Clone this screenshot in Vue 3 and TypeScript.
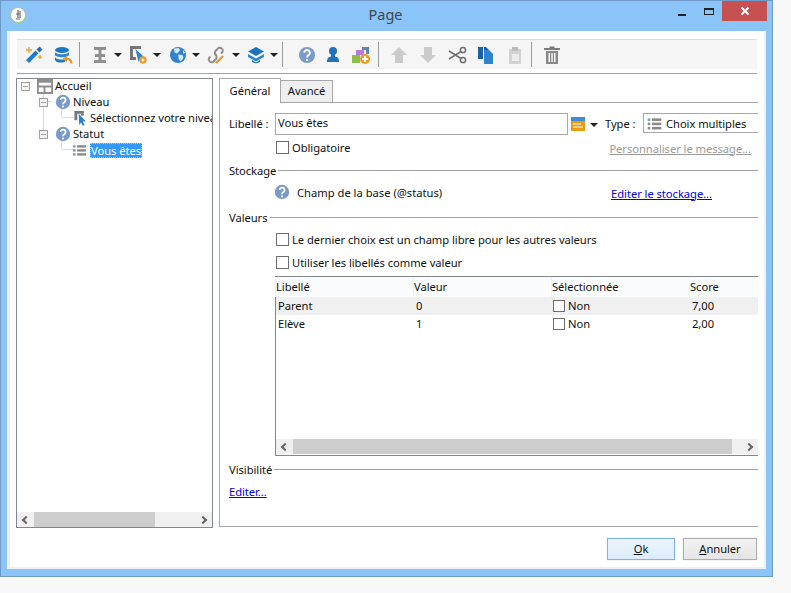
<script setup lang="ts">
// icons share one 20x20 box, drawn with v-html below
const help = '<circle cx="10" cy="10" r="8" fill="#7a9bc9"/><path d="M7.3 7.8a2.8 2.7 0 1 1 4.4 2.2c-1.1.8-1.7 1.2-1.7 2.6" fill="none" stroke="#fff" stroke-width="2"/><rect x="9" y="14" width="2" height="2" fill="#fff"/>'
const listIcon = '<rect x="2" y="4" width="3" height="3" fill="#7a9bc9"/><rect x="2" y="9" width="3" height="3" fill="#8a8a8a"/><rect x="2" y="14" width="3" height="3" fill="#8a8a8a"/><rect x="7" y="4" width="11" height="3" fill="#8a8a8a"/><rect x="7" y="9" width="11" height="3" fill="#8a8a8a"/><rect x="7" y="14" width="11" height="3" fill="#8a8a8a"/>'

const icons: Record<string, string> = {
  wand: '<path d="M3.500 16.500 13 7" stroke="#1d7cc9" stroke-width="4"/><path d="M14 6 17 3" stroke="#2b6ca8" stroke-width="4"/><path d="M5 2v6M2 5h6M16 10v4M14 12h4" stroke="#f0a030" stroke-width="1.300"/>',
  db: '<ellipse cx="9" cy="5" rx="7" ry="3" fill="#1f78c4"/><path d="M2 7c1 3 13 3 14 0v3c-1 3-13 3-14 0z" fill="#2e87d0"/><path d="M2 12c1 3 9 3 10 2v3c-3 1-9 1-10-2z" fill="#1f78c4"/><path d="M18.500 18.500c0-4-3-5-7-4.500" fill="none" stroke="#e8952a" stroke-width="2.200"/><path d="M14 10.500 9.500 14l4.500 3z" fill="#e8952a"/>',
  cursor: '<path d="M4 2h12v3h-4.500v4H15v3h-3.500v3H16v3H4v-3h4.500v-3H5V9h3.500V5H4z" fill="#8f8f8f"/>',
  select: '<path d="M2 1h11v3H5v8h3v3H2z" fill="#777"/><path d="M7.500 4l8.500 8-3.500.3-2 4.700z" fill="#2f80c8"/><circle cx="15" cy="15" r="2.600" fill="none" stroke="#ec9a29" stroke-width="2.200"/>',
  globe: '<circle cx="10" cy="10" r="8" fill="#2e83cf"/><path d="M6 3.500 11 3l1 2.500-3 3-2.500-1zM10 9.500l4.500.5 1 2.500-2.500 4-2-1.500zM15 5l2.500 3-2.500.5z" fill="#d6e8f6"/>',
  link: '<path d="M4.500 11.500 3 13a3 3 0 0 0 4 4l3-3a3 3 0 0 0-1-4.500" fill="none" stroke="#8e8e8e" stroke-width="2"/><path d="M15 8.500 16.500 7a3 3 0 0 0-4-4l-3 3a3 3 0 0 0 .5 4" fill="none" stroke="#8e8e8e" stroke-width="2"/><path d="M10 18l7-7" stroke="#ef9c2b" stroke-width="2.400"/>',
  stack: '<path d="M10 2l8 4.500-8 4.500-8-4.500z" fill="#1f73b8"/><path d="M2 9l8 4.500L18 9v3l-8 4.500L2 12z" fill="#2e87d0"/><path d="M6 15l4 2.500 4-2.500v2l-4 1.500L6 17z" fill="#1f73b8"/>',
  help,
  person: '<circle cx="10" cy="6" r="4" fill="#2272b8"/><path d="M8 9h4v2.500c3 .5 4 2 4 5.500H4c0-3.500 1-5 4-5.500z" fill="#2272b8"/>',
  shapes: '<rect x="5" y="5" width="8" height="5" fill="#b77ad6"/><path d="M11 2h7v7h-3V5h-4z" fill="#5a86b8"/><rect x="1" y="10" width="8" height="8" fill="#8cc04a"/><circle cx="14" cy="14" r="5" fill="#ee9a24"/><path d="M11 14h6M14 11v6" stroke="#fff" stroke-width="1.800"/>',
  up: '<path d="M10 2l8 8h-4v8H6v-8H2z" fill="#cbcbcb"/>',
  down: '<path d="M10 18l8-8h-4V2H6v8H2z" fill="#cbcbcb"/>',
  scissors: '<circle cx="16" cy="5" r="2.600" fill="none" stroke="#6e6e6e" stroke-width="1.500"/><circle cx="16" cy="15" r="2.600" fill="none" stroke="#6e6e6e" stroke-width="1.500"/><path d="M14 6.500 2 14M14 13.500 2 6" stroke="#6e6e6e" stroke-width="1.500"/>',
  copy: '<path d="M3 2h5v12H3z" fill="#1f5fa6"/><path d="M9 5h5l4 4v10H9z" fill="#2e83cf"/><path d="M9 2h2l3 3H9z" fill="#1f5fa6"/>',
  paste: '<path d="M4 4h12v15H4z" fill="#d2d2d2"/><path d="M7 2h6v4H7z" fill="#bdbdbd"/><path d="M7 9h7v7H7z" fill="#ececec"/>',
  trash: '<path d="M7.500 3V1.500h5V3H18v2H2V3z" fill="#7c7c7c"/><path d="M4 6h12v13H4zM6.500 8v9h1.500V8zM9.300 8v9h1.500V8zM12 8v9h1.500V8z" fill="#8a8a8a" fill-rule="evenodd"/>',
  accueil: '<path d="M0 0h17v17H0z" fill="#8e8e8e"/><path d="M2 5h13v3H2zM2 10h5v5H2zM9 10h6v5H9z" fill="#fff"/>',
  level: '<path d="M1 1h10v3H4v7H1z" fill="#777"/><path d="M8 4h3v2H8z" fill="#777"/><path d="M5.500 4 13 12l-3 .3 1.700 3.700-2 .8-1.500-3.500L6 16z" fill="#2f80c8"/>',
  list: listIcon,
  picker: '<rect x="1" y="1" width="14" height="4" fill="#3d8bd1"/><rect x="1" y="5" width="14" height="10" fill="#ee9a11"/><path d="M3 8h8M3 11h10" stroke="#fff" stroke-width="1.200"/>',
}

interface Tool { kind: 'icon' | 'drop' | 'sep'; gap: number; icon?: string }

const tools: Tool[] = [
  { kind: 'icon', gap: 7, icon: 'wand' },
  { kind: 'icon', gap: 9, icon: 'db' },
  { kind: 'sep', gap: 6 },
  { kind: 'icon', gap: 10, icon: 'cursor' },
  { kind: 'drop', gap: 4 },
  { kind: 'icon', gap: 6, icon: 'select' },
  { kind: 'drop', gap: 5 },
  { kind: 'icon', gap: 7, icon: 'globe' },
  { kind: 'drop', gap: 4 },
  { kind: 'icon', gap: 6, icon: 'link' },
  { kind: 'drop', gap: 6 },
  { kind: 'icon', gap: 6, icon: 'stack' },
  { kind: 'drop', gap: 4 },
  { kind: 'sep', gap: 4 },
  { kind: 'icon', gap: 14, icon: 'help' },
  { kind: 'icon', gap: 6, icon: 'person' },
  { kind: 'icon', gap: 8, icon: 'shapes' },
  { kind: 'sep', gap: 7 },
  { kind: 'icon', gap: 10, icon: 'up' },
  { kind: 'icon', gap: 9, icon: 'down' },
  { kind: 'icon', gap: 9, icon: 'scissors' },
  { kind: 'icon', gap: 8, icon: 'copy' },
  { kind: 'icon', gap: 10, icon: 'paste' },
  { kind: 'sep', gap: 6 },
  { kind: 'icon', gap: 10, icon: 'trash' },
]

const choices = [
  { label: 'Parent', value: '0', score: '7,00' },
  { label: 'Elève', value: '1', score: '2,00' },
]
</script>

<template>
  <div class="screen">
    <div class="window">
      <header class="titlebar">
        <span class="app-icon">
          <svg width="14" height="14" viewBox="0 0 14 14"><path d="M7 2v8M9 3v7M5 6h3M5 11h4" stroke="#666" stroke-width="1.200" fill="none" /></svg>
        </span>
        <span class="title">Page</span>
        <div class="controls">
          <span class="minimize"></span>
          <span class="maximize"></span>
          <span class="close">
            <svg width="10" height="10" viewBox="0 0 10 10"><path d="M1.500 1.500l7 7M8.500 1.500l-7 7" stroke="#fff" stroke-width="2" /></svg>
          </span>
        </div>
      </header>

      <div class="client">
        <div class="toolbar">
          <template v-for="(t, i) in tools" :key="i">
            <svg v-if="t.kind === 'icon'" class="tool-icon" :style="{ marginLeft: t.gap + 'px' }" viewBox="0 0 20 20" v-html="icons[t.icon!]"></svg>
            <span v-else-if="t.kind === 'drop'" class="drop" :style="{ marginLeft: t.gap + 'px' }"></span>
            <span v-else class="sep" :style="{ marginLeft: t.gap + 'px' }"></span>
          </template>
        </div>
        <div class="toolbar-rule"></div>

        <div class="body">
          <aside class="tree">
            <div class="tree-rows">
              <span class="branch b1"></span>
              <span class="branch b2"></span>
              <span class="branch b3"></span>
              <span class="branch b4"></span>
              <span class="branch b5"></span>
              <span class="branch b6"></span>
              <div class="node n0">
                <span class="expander"></span>
                <svg class="ic-accueil" viewBox="0 0 17 17" v-html="icons.accueil"></svg>
                <span class="node-label">Accueil</span>
              </div>
              <div class="node n1">
                <span class="expander"></span>
                <svg class="ic-help" viewBox="0 0 20 20" v-html="icons.help"></svg>
                <span class="node-label">Niveau</span>
              </div>
              <div class="node n2">
                <svg class="ic-leaf" viewBox="0 0 17 17" v-html="icons.level"></svg>
                <span class="node-label">Sélectionnez votre niveau</span>
              </div>
              <div class="node n1">
                <span class="expander"></span>
                <svg class="ic-help" viewBox="0 0 20 20" v-html="icons.help"></svg>
                <span class="node-label">Statut</span>
              </div>
              <div class="node n2">
                <svg class="ic-leaf ic-list" viewBox="0 0 20 20" v-html="icons.list"></svg>
                <span class="node-label selected">Vous êtes</span>
              </div>
            </div>
            <div class="hscroll tree-scroll">
              <span class="arrow left"></span>
              <span class="thumb"></span>
              <span class="arrow right"></span>
            </div>
          </aside>

          <section class="panel">
            <div class="tabs">
              <div class="tab active">Général</div>
              <div class="tab">Avancé</div>
            </div>
            <div class="page">
              <div class="row-label">
                <span class="lbl">Libellé :</span>
                <div class="input">Vous êtes</div>
                <svg class="picker" viewBox="0 0 16 16" v-html="icons.picker"></svg>
                <span class="drop small"></span>
                <span class="type-lbl">Type :</span>
                <div class="combo">
                  <svg class="combo-icon" viewBox="0 0 20 20" v-html="icons.list"></svg>
                  Choix multiples
                </div>
              </div>
              <div class="row-required">
                <label class="check"><span class="box"></span>Obligatoire</label>
                <a class="link muted">Personnaliser le message...</a>
              </div>

              <div class="group g-stock"><span>Stockage</span><i></i></div>
              <div class="row-field">
                <div class="field-name">
                  <svg class="ic-help" viewBox="0 0 20 20" v-html="icons.help"></svg>
                  Champ de la base (@status)
                </div>
                <a class="link">Editer le stockage...</a>
              </div>

              <div class="group g-values"><span>Valeurs</span><i></i></div>
              <label class="check opt first"><span class="box"></span>Le dernier choix est un champ libre pour les autres valeurs</label>
              <label class="check opt"><span class="box"></span>Utiliser les libellés comme valeur</label>

              <div class="table">
                <div class="t-row t-head">
                  <span>Libellé</span><span>Valeur</span><span>Sélectionnée</span><span>Score</span>
                </div>
                <div v-for="(c, i) in choices" :key="c.label" class="t-row t-body" :class="{ shaded: i === 0 }">
                  <span>{{ c.label }}</span>
                  <span>{{ c.value }}</span>
                  <span class="t-check"><span class="box"></span>Non</span>
                  <span>{{ c.score }}</span>
                </div>
                <div class="hscroll table-scroll">
                  <span class="arrow left"></span>
                  <span class="thumb"></span>
                  <span class="arrow right"></span>
                </div>
              </div>

              <div class="group g-visible"><span>Visibilité</span><i></i></div>
              <a class="link edit">Editer...</a>
            </div>
          </section>
        </div>

        <footer class="actions">
          <button class="btn primary"><u>O</u>k</button>
          <button class="btn"><u>A</u>nnuler</button>
        </footer>
      </div>
    </div>
  </div>
</template>

<style>
html, body {
  margin: 0;
  background: #f8f8f8;
}
</style>

<style scoped>
.screen {
  width: 791px;
  height: 593px;
  background: #f8f8f8;
  overflow: hidden;
  font-family: "Noto Sans", "Liberation Sans", sans-serif;
  font-size: 11.2px;
  letter-spacing: -0.05px;
  color: #111;
}
.window {
  width: 773px;
  height: 577px;
  box-sizing: border-box;
  border: 1px solid #6f9bc9;
  background: #8ac4f8;
  display: flex;
  flex-direction: column;
}
.titlebar {
  height: 30px;
  flex: none;
  position: relative;
  display: flex;
  align-items: flex-start;
  justify-content: center;
}
.app-icon {
  position: absolute;
  left: 9px;
  top: 6px;
  width: 16px;
  height: 16px;
  box-sizing: border-box;
  border-radius: 50%;
  background: #fff;
  border: 1px solid #a8cc70;
  display: flex;
  align-items: center;
  justify-content: center;
}
.title {
  font-size: 14.5px;
  color: #444;
  line-height: 27px;
  margin-left: -2px;
}
.controls {
  position: absolute;
  right: 5px;
  top: 0;
  display: flex;
}
.minimize {
  width: 8px;
  height: 2px;
  background: #222;
  margin: 13px 18px 0 0;
}
.maximize {
  width: 10px;
  height: 7px;
  box-sizing: border-box;
  border: 1px solid #222;
  border-top-width: 2px;
  margin: 7px 8px 0 0;
}
.close {
  width: 45px;
  height: 20px;
  background: #c75050;
  display: flex;
  align-items: center;
  justify-content: center;
}

.client {
  flex: 1;
  margin: 0 6px 7px;
  background: #fff;
  border: solid #f0f0f0;
  border-width: 0 2px 2px 3px;
  display: flex;
  flex-direction: column;
  padding: 8px 7px 0 7px;
  min-height: 0;
}
.toolbar {
  height: 30px;
  flex: none;
  box-sizing: border-box;
  background: #f5f5f5;
  border-top: 1px solid #ddd;
  display: flex;
  align-items: center;
}
.tool-icon {
  width: 20px;
  height: 20px;
  flex: none;
}
.drop {
  width: 0;
  height: 0;
  flex: none;
  border-style: solid;
  border-width: 4px 4px 0;
  border-color: #222 transparent transparent;
}
.drop.small {
  margin-left: 4px;
  margin-top: 2px;
}
.sep {
  width: 1px;
  height: 25px;
  flex: none;
  background: #9a9a9a;
}
.toolbar-rule {
  height: 1px;
  background: #a0a0a0;
  margin-top: 4px;
  flex: none;
}

.body {
  display: flex;
  margin: 4px -1px 0 -1px;
  gap: 6px;
  height: 450px;
}
.tree {
  width: 197px;
  box-sizing: border-box;
  border: 1px solid #82878c;
  display: flex;
  flex-direction: column;
  flex: none;
}
.tree-rows {
  flex: 1;
  position: relative;
  overflow: hidden;
}
.node {
  height: 16px;
  display: flex;
  align-items: center;
  white-space: nowrap;
  position: relative;
}
.node:nth-child(7) {
  margin-top: -1px;
}
.n0 { padding-left: 4px; }
.n1 { padding-left: 22px; }
.n2 { padding-left: 56px; }
.expander {
  width: 9px;
  height: 9px;
  box-sizing: border-box;
  border: 1px solid #a0a0a0;
  background: linear-gradient(#a0a0a0, #a0a0a0) center / 5px 1px no-repeat #f4f4f4;
  flex: none;
  margin-right: 7px;
}
.ic-accueil {
  width: 16px;
  height: 16px;
  flex: none;
  margin-right: 2px;
}
.ic-help {
  width: 18px;
  height: 18px;
  flex: none;
  margin-left: -1px;
  margin-right: 1px;
}
.ic-leaf {
  width: 17px;
  height: 16px;
  flex: none;
}
.ic-list {
  margin-left: -2px;
  margin-right: 2px;
}
.node-label {
  line-height: 15px;
  position: relative;
  top: -1px;
}
.selected {
  top: 0;
  padding: 0 1px;
  background: #3399ff;
  color: #fff;
  outline: 1px dotted #9fcfff;
  outline-offset: -1px;
}
.branch {
  position: absolute;
  background: #dcdcdc;
}
.b1 { left: 26px; top: 15px; width: 1px; height: 37px; }
.b2 { left: 27px; top: 22px; width: 7px; height: 1px; }
.b3 { left: 44px; top: 28px; width: 1px; height: 10px; }
.b4 { left: 45px; top: 38px; width: 12px; height: 1px; }
.b5 { left: 44px; top: 60px; width: 1px; height: 10px; }
.b6 { left: 45px; top: 70px; width: 12px; height: 1px; }

.hscroll {
  height: 15px;
  flex: none;
  background: #f0f0f0;
  display: flex;
  align-items: center;
}
.thumb {
  background: #cdcdcd;
  height: 15px;
  flex: none;
}
.arrow {
  width: 6px;
  height: 6px;
  box-sizing: border-box;
  border: solid #666;
  border-width: 2px 0 0 2px;
  flex: none;
}
.arrow.left {
  transform: rotate(-45deg);
  margin-left: 6px;
}
.arrow.right {
  transform: rotate(135deg);
  margin-left: auto;
  margin-right: 6px;
}
.tree-scroll .thumb {
  width: 121px;
  margin-left: 5px;
}
.table-scroll .thumb {
  width: 439px;
  margin-left: 5px;
}

.panel {
  flex: 1;
  display: flex;
  flex-direction: column;
  min-width: 0;
  margin-bottom: 1px;
}
.tabs {
  display: flex;
  height: 24px;
  align-items: flex-end;
  flex: none;
  position: relative;
  z-index: 1;
}
.tab {
  box-sizing: border-box;
  height: 22px;
  width: 52px;
  background: #efefef;
  border: 1px solid #a8a8a8;
  border-bottom: 0;
  border-left: 0;
  text-align: center;
  line-height: 20px;
}
.tab.active {
  height: 25px;
  width: 62px;
  margin-bottom: -1px;
  background: #fff;
  border-left: 1px solid #a8a8a8;
  line-height: 24px;
}
.page {
  flex: 1;
  border: 1px solid #a8a8a8;
  border-right: 0;
  padding: 10px 0 0 9px;
  min-height: 0;
}
.row-label {
  display: flex;
  align-items: center;
  height: 22px;
}
.lbl {
  width: 46px;
  flex: none;
  margin-bottom: 2px;
}
.input {
  width: 293px;
  height: 22px;
  box-sizing: border-box;
  border: 1px solid #a8a8a8;
  padding-left: 2px;
  line-height: 18px;
  flex: none;
}
.picker {
  width: 16px;
  height: 16px;
  margin-left: 2px;
  flex: none;
}
.type-lbl {
  margin-left: 7px;
  width: 38px;
  flex: none;
  margin-bottom: 2px;
}
.combo {
  flex: 1;
  height: 20px;
  box-sizing: border-box;
  border: 1px solid #a8a8a8;
  border-right: 0;
  margin-bottom: 2px;
  display: flex;
  align-items: center;
  gap: 3px;
  white-space: nowrap;
}
.combo-icon {
  width: 17px;
  height: 17px;
  margin-left: 2px;
  flex: none;
}
.row-required {
  display: flex;
  justify-content: space-between;
  margin-top: 4px;
  height: 16px;
  padding-left: 47px;
  padding-right: 7px;
  align-items: center;
}
.row-required .link {
  margin-top: 2px;
}
.check {
  display: flex;
  align-items: center;
  white-space: nowrap;
  height: 16px;
}
.box {
  width: 13px;
  height: 13px;
  box-sizing: border-box;
  border: 1px solid #6e6e6e;
  background: #fff;
  flex: none;
  margin-right: 3px;
}
.link {
  color: #0000ee;
  text-decoration: underline;
  white-space: nowrap;
}
.link.muted {
  color: #9a9a9a;
}
.group {
  display: flex;
  align-items: center;
  gap: 2px;
}
.group span {
  flex: none;
}
.group i {
  flex: 1;
  height: 1px;
  background: #a0a0a0;
}
.g-stock { margin-top: 7px; height: 16px; }
.row-field {
  display: flex;
  justify-content: space-between;
  align-items: center;
  height: 20px;
  margin-top: 4px;
  padding-left: 45px;
  padding-right: 46px;
}
.row-field .link {
  margin-top: 2px;
}
.field-name {
  display: flex;
  align-items: center;
  gap: 5px;
  letter-spacing: 0;
}
.g-values { margin-top: 7px; height: 16px; }
.opt {
  margin-left: 47px;
  height: 16px;
}
.opt.first {
  margin-top: 6px;
}
.opt + .opt {
  margin-top: 7px;
}
.table {
  margin: 6px 0 0 46px;
  height: 180px;
  box-sizing: border-box;
  border: solid #82878c;
  border-width: 1px 0 1px 1px;
  display: flex;
  flex-direction: column;
}
.t-row {
  display: grid;
  grid-template-columns: 138px 138px 138px 1fr;
  align-items: center;
}
.t-head {
  height: 20px;
  background: #fafbfd;
}
.t-head span {
  border-left: 1px solid #eef1f6;
  line-height: 20px;
  margin-left: -1px;
}
.t-body {
  height: 18px;
}
.t-body > span {
  padding: 0 0 2px 2px;
}
.shaded {
  background: #f0f0f0;
}
.t-body > .t-check {
  display: flex;
  align-items: center;
  padding-left: 1px;
}
.t-check .box {
  width: 12px;
  height: 12px;
  margin: 0 3px -2px 0;
}
.table-scroll {
  margin-top: auto;
  margin-bottom: 1px;
}
.g-visible {
  margin-top: 5px;
  height: 16px;
}
.edit {
  display: block;
  margin-top: 7px;
  width: fit-content;
}

.actions {
  display: flex;
  justify-content: flex-end;
  gap: 8px;
  margin-top: 10px;
}
.btn {
  height: 22px;
  width: 74px;
  box-sizing: border-box;
  font: inherit;
  letter-spacing: inherit;
  color: #111;
  border: 1px solid #adadad;
  background: linear-gradient(#f2f2f2, #e5e5e5);
  padding: 0 0 2px;
  box-shadow: 0 0 0 1px #f5f5f5;
}
.btn.primary {
  width: 68px;
  border-color: #7eb4ea;
  background: linear-gradient(#ecf4fc, #dcecfc);
}
</style>
